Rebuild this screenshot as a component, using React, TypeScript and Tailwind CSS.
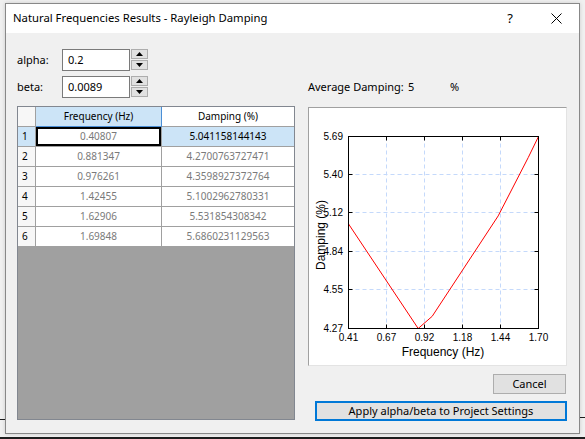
import React from 'react';

const rows = [
  ['0.40807', '5.041158144143'],
  ['0.881347', '4.2700763727471'],
  ['0.976261', '4.3598927372764'],
  ['1.42455', '5.1002962780331'],
  ['1.62906', '5.531854308342'],
  ['1.69848', '5.6860231129563'],
];

// plot box in page coordinates (the svg viewBox uses them directly)
const X0 = 348.5;
const X1 = 538.5;
const Y0 = 329.5;
const Y1 = 137.5;
const xTicks = [348.5, 386.5, 424.5, 462.5, 500.5, 538.5];
const yTicks = [137.5, 175.5, 213.5, 252.5, 290.5, 329.5];
const xLabels = ['0.41', '0.67', '0.92', '1.18', '1.44', '1.70'];
const yLabels = ['5.69', '5.40', '5.12', '4.84', '4.55', '4.27'];

const Triangle: React.FC<{ up?: boolean }> = ({ up }) => (
  <svg width="7" height="4" viewBox="0 0 7 4">
    <path d={up ? 'M0 4 L3.5 0 L7 4 Z' : 'M0 0 L3.5 4 L7 0 Z'} fill="#000" />
  </svg>
);

const SpinBox: React.FC<{ label: string; value: string }> = ({ label, value }) => (
  <div className="flex items-center h-[22px]">
    <span className="w-[45px] text-[11px] text-black">{label}</span>
    <div className="w-[68px] h-full border border-[#7a7a7a] bg-white flex items-center pl-[5px] text-[11px] text-black">
      {value}
    </div>
    <div className="flex flex-col w-[17px] h-[22px] ml-[1px] gap-[1px]">
      <div className="h-[10px] border border-[#adadad] bg-[#e1e1e1] flex items-center justify-center">
        <Triangle up />
      </div>
      <div className="h-[10px] border border-[#adadad] bg-[#e1e1e1] flex items-center justify-center">
        <Triangle />
      </div>
    </div>
  </div>
);

const ResultsGrid: React.FC = () => (
  <div className="mt-[8px] h-[314px] border border-[#828790] bg-[#a0a0a0] flex flex-col text-[10px]">
    <div className="flex h-[20px] bg-white">
      <div className="w-[18px] border-r border-b border-[#a0a0a0] bg-[#f7f7f7]" />
      <div className="w-[126px] border-r border-b border-[#4b8fd6] bg-[#cce4f7] flex items-center justify-center text-black">
        Frequency (Hz)
      </div>
      <div className="w-[132px] border-b border-[#a0a0a0] bg-white flex items-center justify-center text-black">
        Damping (%)
      </div>
    </div>
    {rows.map(([f, d], i) => (
      <div key={i} className="flex h-[20px] bg-white">
        <div
          className={`w-[18px] border-r border-b border-[#a0a0a0] flex items-center pl-[4px] text-black ${
            i === 0 ? 'bg-[#cce4f7]' : 'bg-[#f7f7f7]'
          }`}
        >
          {i + 1}
        </div>
        <div
          className={`w-[126px] border-r border-b border-[#a0a0a0] flex items-center justify-center text-[#7a7a7a] ${
            i === 0 ? 'shadow-[inset_0_0_0_2px_#000]' : ''
          }`}
        >
          {f}
        </div>
        <div
          className={`w-[132px] border-b border-[#a0a0a0] flex items-center justify-center ${
            i === 0 ? 'bg-[#cce4f7] text-black' : 'text-[#7a7a7a]'
          }`}
        >
          {d}
        </div>
      </div>
    ))}
  </div>
);

const DampingChart: React.FC = () => {
  const fs = rows.map((r) => parseFloat(r[0]));
  const ds = rows.map((r) => parseFloat(r[1]));
  const fMin = Math.min(...fs);
  const fMax = Math.max(...fs);
  const dMin = Math.min(...ds);
  const dMax = Math.max(...ds);
  const pts = fs
    .map((f, i) => {
      const x = X0 + ((f - fMin) / (fMax - fMin)) * (X1 - X0);
      const y = Y0 - ((ds[i] - dMin) / (dMax - dMin)) * (Y0 - Y1);
      return `${x.toFixed(1)},${y.toFixed(1)}`;
    })
    .join(' ');

  return (
    <div className="mt-[9px] h-[259px] border-t border-l border-[#a0a0a0] border-r border-b border-r-[#e3e3e3] border-b-[#e3e3e3] bg-white">
      <svg width="257" height="257" viewBox="309 109 257 257" className="block">
        {xTicks.slice(1, -1).map((x) => (
          <line key={x} x1={x} y1={Y1} x2={x} y2={Y0} stroke="#c4d9fb" strokeDasharray="4 3" />
        ))}
        {yTicks.slice(1, -1).map((y) => (
          <line key={y} x1={X0} y1={y} x2={X1} y2={y} stroke="#c4d9fb" strokeDasharray="4 3" />
        ))}
        <polyline points={pts} fill="none" stroke="#ff0000" strokeWidth="1" />
        <rect x={X0} y={Y1} width={X1 - X0} height={Y0 - Y1} fill="none" stroke="#000" />
        {xTicks.slice(1, -1).map((x) => (
          <g key={x}>
            <line x1={x} y1={Y1} x2={x} y2={Y1 + 4} stroke="#000" />
            <line x1={x} y1={Y0} x2={x} y2={Y0 - 4} stroke="#000" />
          </g>
        ))}
        {yTicks.slice(1, -1).map((y) => (
          <g key={y}>
            <line x1={X0} y1={y} x2={X0 + 4} y2={y} stroke="#000" />
            <line x1={X1} y1={y} x2={X1 - 4} y2={y} stroke="#000" />
          </g>
        ))}
        <g fontFamily="'Liberation Sans', Arial, sans-serif" fontSize="10" fill="#000">
          {yLabels.map((l, i) => (
            <text key={l} x={343} y={yTicks[i] + 3.5} textAnchor="end">
              {l}
            </text>
          ))}
          {xLabels.map((l, i) => (
            <text key={l} x={xTicks[i]} y={342} textAnchor="middle">
              {l}
            </text>
          ))}
        </g>
        <g fontFamily="'Liberation Sans', Arial, sans-serif" fontSize="12" fill="#000">
          <text x={443} y={356.5} textAnchor="middle">
            Frequency (Hz)
          </text>
          <text x={324.5} y={236} textAnchor="middle" transform="rotate(-90 324.5 236)">
            Damping (%)
          </text>
        </g>
      </svg>
    </div>
  );
};

export default function App() {
  return (
    <div className="relative w-[585px] h-[439px] overflow-hidden bg-[#f0f0f0] font-['Noto_Sans',sans-serif]">
      {/* bits of the parent window peeking out behind the dialog */}
      <div className="absolute left-0 top-[437px] w-[585px] h-[2px] bg-[#1e1e1e]" />
      <div className="absolute left-0 top-[419px] w-[5px] h-px bg-[#1e1e1e]" />
      <div className="absolute right-0 top-[417px] w-[6px] h-px bg-[#1e1e1e]" />

      <div className="relative ml-[5px] mt-[3px] w-[575px] h-[431px] border border-[#888888] bg-[#f0f0f0] flex flex-col shadow-[0_0_4px_rgba(0,0,0,0.15)]">
        {/* title bar */}
        <div className="h-[29px] bg-white flex items-center pl-[7px] shrink-0">
          <span className="text-[11.3px] text-black">Natural Frequencies Results - Rayleigh Damping</span>
          <div className="ml-auto flex h-full">
            <div className="w-[46px] h-full flex items-center justify-center text-[13px] text-black">?</div>
            <div className="w-[46px] h-full flex items-center justify-center">
              <svg width="11" height="11" viewBox="0 0 11 11">
                <path d="M0.5 0.5 L10.5 10.5 M10.5 0.5 L0.5 10.5" stroke="#000" strokeWidth="1" />
              </svg>
            </div>
          </div>
        </div>

        {/* body */}
        <div className="flex pl-[11px] pt-[16px]">
          <div className="w-[278px] flex flex-col">
            <SpinBox label="alpha:" value="0.2" />
            <div className="mt-[5px]">
              <SpinBox label="beta:" value="0.0089" />
            </div>
            <ResultsGrid />
          </div>

          <div className="ml-[13px] w-[259px] flex flex-col">
            <div className="h-[27px]" />
            <div className="h-[22px] flex items-center text-[11px] text-black">
              <span className="w-[100px]">Average Damping:</span>
              <span className="w-[42px]">5</span>
              <span>%</span>
            </div>
            <DampingChart />
            <div className="mt-[8px] self-end mr-[1px] w-[73px] h-[20px] border border-[#adadad] bg-[#e1e1e1] flex items-center justify-center text-[11px] text-black">
              Cancel
            </div>
            <div className="mt-[7px] ml-[7px] w-[252px] h-[20px] border-2 border-[#0078d7] bg-[#e1e1e1] flex items-center justify-center text-[11px] text-black">
              Apply alpha/beta to Project Settings
            </div>
          </div>
        </div>
      </div>
    </div>
  );
}
